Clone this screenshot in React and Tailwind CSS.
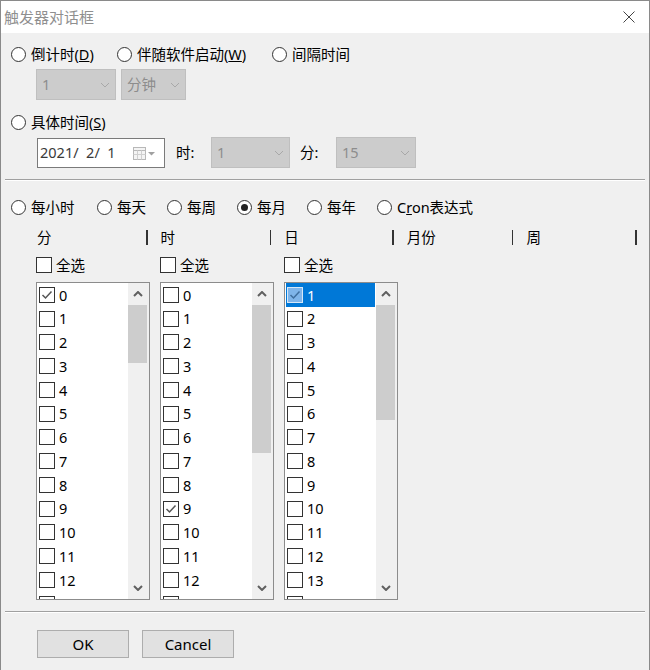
import React from "react";

const FONT = "font-['Noto_Sans','Noto_Sans_CJK_SC',sans-serif]";

function Radio({ label, checked, w }) {
  return (
    <div className={`flex items-center gap-[5px] ${w}`}>
      <span className="w-[15px] h-[15px] rounded-full border border-[#333] bg-white flex items-center justify-center shrink-0">
        {checked && <span className="w-[7px] h-[7px] rounded-full bg-[#222]" />}
      </span>
      <span className="text-[14.5px] leading-[20px] text-black whitespace-nowrap">{label}</span>
    </div>
  );
}

function CheckBox({ checked, selected }) {
  return (
    <span
      className={
        selected
          ? "w-[16px] h-[16px] border border-[#d6e8f8] bg-[#7fb5ea] flex items-center justify-center shrink-0"
          : "w-[16px] h-[16px] border border-[#333] bg-white flex items-center justify-center shrink-0"
      }
    >
      {checked && (
        <svg width="14" height="14" viewBox="0 0 14 14">
          <polyline
            points="2.5,7 5.5,10 11.5,3.5"
            fill="none"
            stroke={selected ? "#3f6f9f" : "#555"}
            strokeWidth="1.5"
          />
        </svg>
      )}
    </span>
  );
}

function Chevron({ up, color = "#606060", strokeWidth = 2 }) {
  return (
    <svg width="10" height="6" viewBox="0 0 10 6">
      <polyline
        points={up ? "1,5 5,1 9,5" : "1,1 5,5 9,1"}
        fill="none"
        stroke={color}
        strokeWidth={strokeWidth}
      />
    </svg>
  );
}

function Combo({ value, w }) {
  return (
    <div className={`h-[31px] ${w} bg-[#cccccc] border border-[#bfbfbf] flex items-center justify-between pl-[5px] pr-[5px]`}>
      <span className="text-[14.5px] text-[#8d8d8d] leading-none">{value}</span>
      <Chevron color="#a8a8a8" strokeWidth={1} />
    </div>
  );
}

function ListBox({ items, checkedIdx, selectedIdx, thumbH }) {
  return (
    <div className="w-[114px] h-[318px] border border-[#8c8c8c] bg-white flex">
      <div className="flex-1 overflow-hidden flex flex-col">
        {items.map((n, i) => {
          const sel = i === selectedIdx;
          const last = i === items.length - 1;
          return (
            <div
              key={n}
              className={
                sel
                  ? "h-[23.75px] shrink-0 mx-[1px] pl-[1px] flex items-center gap-[4px] bg-[#0078d7]"
                  : "h-[23.75px] shrink-0 mx-[1px] pl-[1px] flex items-center gap-[4px]"
              }
            >
              <CheckBox checked={i === checkedIdx || sel} selected={sel} />
              {!last && (
                <span className={sel ? "text-[14.5px] leading-none text-white" : "text-[14.5px] leading-none text-black"}>
                  {n}
                </span>
              )}
            </div>
          );
        })}
      </div>
      <div className="w-[21px] bg-[#f0f0f0] flex flex-col">
        <div className="h-[22px] flex items-center justify-center pr-[2px]">
          <Chevron up />
        </div>
        <div className="mr-[2px] bg-[#cdcdcd]" style={{ height: thumbH }} />
        <div className="flex-1" />
        <div className="h-[22px] flex items-center justify-center pr-[2px]">
          <Chevron />
        </div>
      </div>
    </div>
  );
}

function Header({ label, w }) {
  return (
    <div className={`${w} pl-[1px] pr-[12px] flex items-center justify-between`}>
      <span className="text-[14.5px] leading-[20px] text-black">{label}</span>
      <span className="w-[1.5px] h-[15px] bg-[#333]" />
    </div>
  );
}

function SelectAll() {
  return (
    <div className="w-[124px] flex items-center gap-[4px]">
      <CheckBox />
      <span className="text-[14.5px] leading-[20px] text-black">全选</span>
    </div>
  );
}

function Separator() {
  return <div className="mx-[4px] h-[2px] border-t border-[#a0a0a0] border-b border-b-white" />;
}

export default function App() {
  const range = (a, n) => Array.from({ length: n }, (_, i) => a + i);
  return (
    <div className={`w-[650px] h-[670px] bg-[#f0f0f0] border-l border-r border-t border-[#8a8a8a] flex flex-col overflow-hidden ${FONT}`}>
      {/* Title bar */}
      <div className="h-[32px] shrink-0 bg-white flex items-center justify-between pl-[3px] pr-[14px]">
        <span className="text-[15px] text-[#8f8f8f] leading-none">触发器对话框</span>
        <svg width="12" height="12" viewBox="0 0 12 12">
          <line x1="0.5" y1="0.5" x2="11.5" y2="11.5" stroke="#444" strokeWidth="1" />
          <line x1="11.5" y1="0.5" x2="0.5" y2="11.5" stroke="#444" strokeWidth="1" />
        </svg>
      </div>

      {/* Row 1 radios */}
      <div className="mt-[11px] pl-[10px] flex items-center h-[20px]">
        <Radio w="w-[106px]" label={<>倒计时(<span className="underline">D</span>)</>} />
        <Radio w="w-[155px]" label={<>伴随软件启动(<span className="underline">W</span>)</>} />
        <Radio w="w-[120px]" label="间隔时间" />
      </div>

      <div className="mt-[5px] pl-[35px] flex items-center gap-[5px]">
        <Combo value="1" w="w-[80px]" />
        <Combo value="分钟" w="w-[65px]" />
      </div>

      <div className="mt-[12px] pl-[10px] flex items-center h-[20px]">
        <Radio w="w-[140px]" label={<>具体时间(<span className="underline">S</span>)</>} />
      </div>

      <div className="mt-[5px] pl-[36px] flex items-center">
        <div className="w-[128px] h-[30px] bg-white border border-[#7a7a7a] flex items-center pl-[2px]">
          <span className="text-[14.5px] leading-none text-[#3a3a3a] whitespace-pre w-[93px]">2021/  2/  1</span>
          <svg width="24" height="14" viewBox="0 0 24 14">
            <rect x="0.5" y="1.5" width="12" height="12" fill="#f4f4f4" stroke="#b8b8b8" />
            <line x1="0.5" y1="4.5" x2="12.5" y2="4.5" stroke="#b8b8b8" />
            <line x1="4.5" y1="4.5" x2="4.5" y2="13.5" stroke="#d0d0d0" />
            <line x1="8.5" y1="4.5" x2="8.5" y2="13.5" stroke="#d0d0d0" />
            <line x1="0.5" y1="8.5" x2="12.5" y2="8.5" stroke="#d0d0d0" />
            <polygon points="15,6 22,6 18.5,9.5" fill="#a0a0a0" />
          </svg>
        </div>
        <span className="ml-[11px] w-[35px] text-[14.5px] leading-none text-black">时:</span>
        <Combo value="1" w="w-[79px]" />
        <span className="ml-[10px] w-[36px] text-[14.5px] leading-none text-black">分:</span>
        <Combo value="15" w="w-[80px]" />
      </div>

      <div className="mt-[11px]">
        <Separator />
      </div>

      {/* Frequency radios */}
      <div className="mt-[16px] pl-[10px] flex items-center h-[20px]">
        <Radio w="w-[86px]" label="每小时" />
        <Radio w="w-[70px]" label="每天" />
        <Radio w="w-[70px]" label="每周" />
        <Radio w="w-[70px]" label="每月" checked />
        <Radio w="w-[70px]" label="每年" />
        <Radio w="w-[120px]" label={<>C<span className="underline">r</span>on表达式</>} />
      </div>

      {/* Column headers */}
      <div className="mt-[10px] pl-[35px] flex items-center h-[20px]">
        <Header label="分" w="w-[124px]" />
        <Header label="时" w="w-[124px]" />
        <Header label="日" w="w-[123px]" />
        <Header label="月份" w="w-[120px]" />
        <Header label="周" w="w-[124px]" />
      </div>

      {/* Select all */}
      <div className="mt-[8px] pl-[35px] flex items-center h-[20px]">
        <SelectAll />
        <SelectAll />
        <SelectAll />
      </div>

      {/* Lists */}
      <div className="mt-[7px] pl-[35px] flex gap-[10px]">
        <ListBox items={range(0, 14)} checkedIdx={0} thumbH={58} />
        <ListBox items={range(0, 14)} checkedIdx={9} thumbH={148} />
        <ListBox items={range(1, 14)} selectedIdx={0} thumbH={115} />
      </div>

      <div className="mt-[11px]">
        <Separator />
      </div>

      {/* Buttons */}
      <div className="mt-[17px] pl-[36px] flex gap-[13px]">
        <button className="w-[92px] h-[28px] bg-[#e1e1e1] border border-[#adadad] text-[15px] leading-none text-black">
          OK
        </button>
        <button className="w-[92px] h-[28px] bg-[#e1e1e1] border border-[#adadad] text-[15px] leading-none text-black">
          Cancel
        </button>
      </div>
    </div>
  );
}
